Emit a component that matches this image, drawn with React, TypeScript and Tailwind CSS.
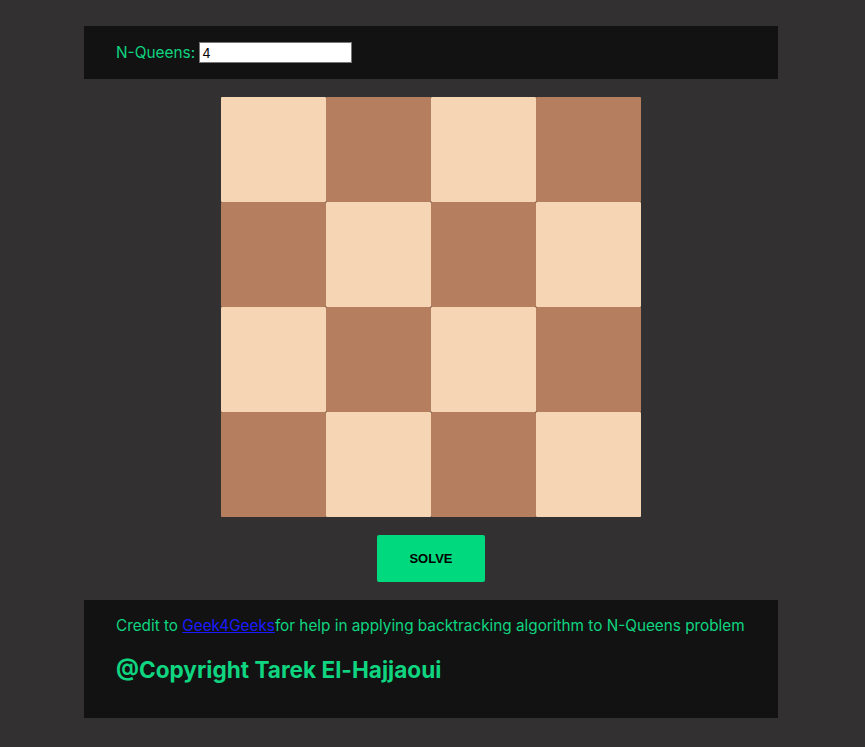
import { useState } from "react";

export default function App() {
  const [n, setN] = useState("4");
  const size = 4;
  const cells = Array.from({ length: size * size }, (_, i) => i);

  return (
    <div className="min-h-screen bg-[#323031] font-['Inter',sans-serif]">
      <div className="w-[862px] pt-[26px] flex flex-col items-center">
        {/* header */}
        <div className="w-[694px] h-[53px] bg-[#121212] flex items-center pl-[32px]">
          <label className="text-[15.4px] text-[#0fd580]">N-Queens:</label>
          <input
            value={n}
            onChange={(e) => setN(e.target.value)}
            className="ml-[4px] w-[153px] h-[21px] bg-white border border-[#767676] px-[2px] text-[13px] text-black outline-none"
          />
        </div>

        {/* board */}
        <div className="mt-[18px] grid grid-cols-4 w-[420px]">
          {cells.map((i) => {
            const r = Math.floor(i / size);
            const c = i % size;
            const light = (r + c) % 2 === 0;
            return (
              <div
                key={i}
                className={
                  light
                    ? "h-[105px] rounded-[1px] bg-[#f5d5b3]"
                    : "h-[105px] rounded-[1px] bg-[#b57e5f]"
                }
              />
            );
          })}
        </div>

        <button className="mt-[18px] w-[108px] h-[47px] rounded-[2px] bg-[#00d97e] text-[13px] font-bold text-black font-['Liberation_Sans',sans-serif]">
          SOLVE
        </button>

        {/* footer */}
        <div className="mt-[18px] w-[694px] h-[118px] bg-[#121212] pl-[32px] pt-[16px]">
          <p className="text-[15.3px] leading-[20px] text-[#0fd580]">
            Credit to{" "}
            <a href="#" className="text-[#1a1aff] underline">
              Geek4Geeks
            </a>
            for help in applying backtracking algorithm to N-Queens problem
          </p>
          <h2 className="mt-[20px] text-[22.6px] leading-[28px] font-bold text-[#0fd580]">
            @Copyright Tarek El-Hajjaoui
          </h2>
        </div>
      </div>
    </div>
  );
}
